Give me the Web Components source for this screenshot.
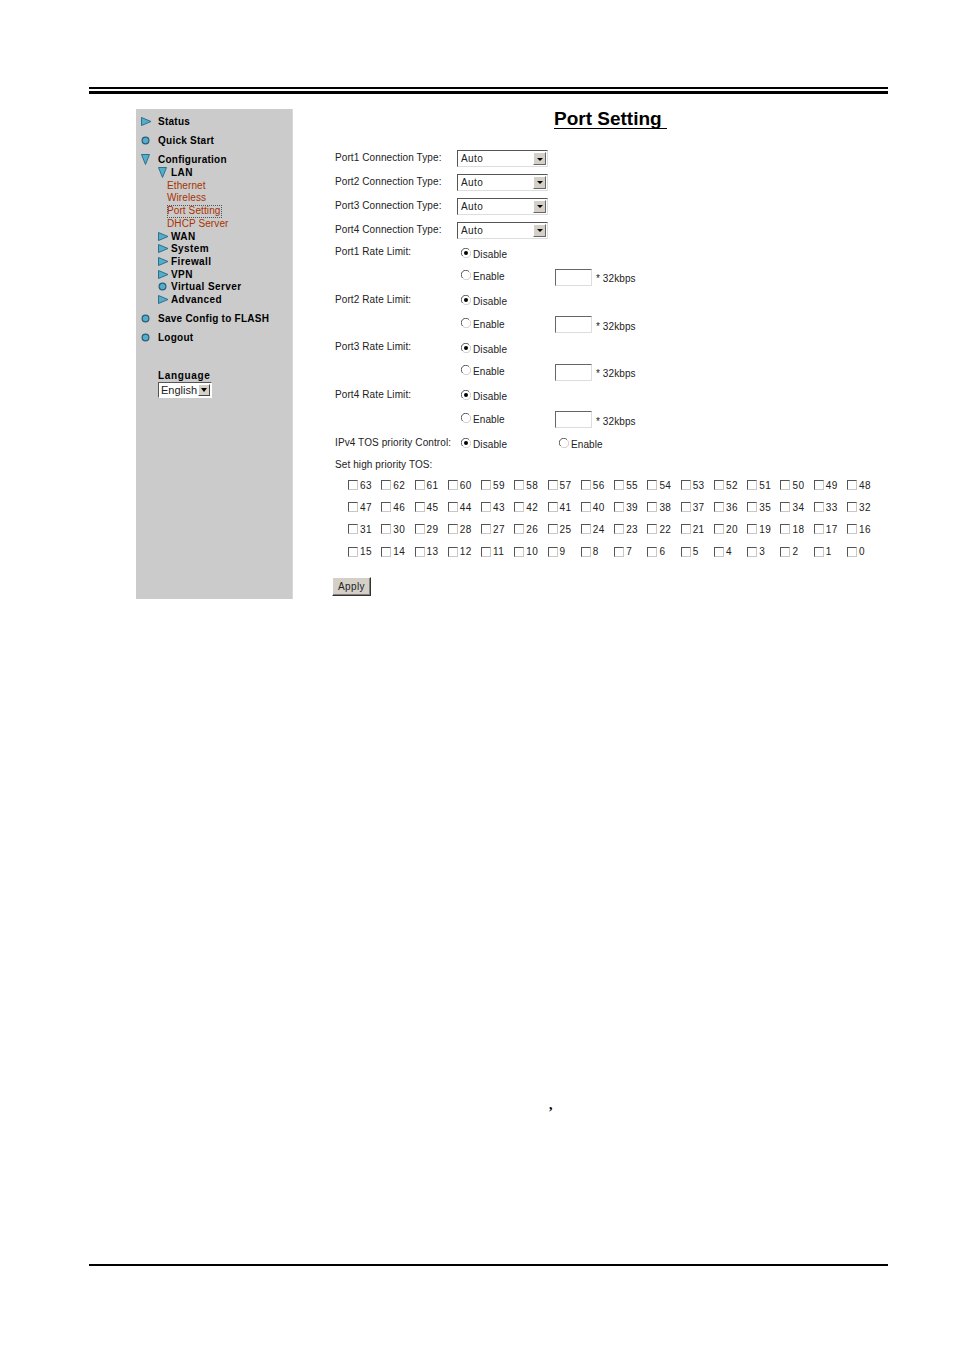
<!DOCTYPE html>
<html>
<head>
<meta charset="utf-8">
<title>Port Setting</title>
<style>
  html, body { margin: 0; background: #fff; }
  body { font-family: "Liberation Sans", Arial, sans-serif; }
</style>
</head>
<body>
<manual-page>
  <router-menu slot="menu"></router-menu>
  <port-setting slot="content"></port-setting>
</manual-page>

<script>
const ARROW = `<svg width="11" height="9" viewBox="0 0 11 9"><path d="M.5.5 10 4.5.5 8.5z" fill="#55adcc" stroke="#2f6f88"/></svg>`;
const DOWN = `<svg width="9" height="11" viewBox="0 0 9 11"><path d="M.5.5h8L4.5 10.5z" fill="#55adcc" stroke="#2f6f88"/></svg>`;
const DOT = `<svg width="9" height="9" viewBox="0 0 9 9"><circle cx="4.5" cy="4.5" r="3.4" fill="#55adcc" stroke="#2a5f78" stroke-width="1.2"/></svg>`;

// page frame: double rule on top, single rule at the bottom
class ManualPage extends HTMLElement {
  constructor() {
    super();
    this.attachShadow({ mode: "open" });
    this.shadowRoot.innerHTML = `
      <style>
        :host { display: block; width: 954px; height: 1349px; box-sizing: border-box; padding: 87px 66px 0 89px; overflow: hidden; }
        .top { height: 2px; border-top: 2px solid #000; border-bottom: 3px solid #000; margin-bottom: 15px; }
        .frame { display: flex; margin-left: 47px; height: 490px; }
        .mark { height: 513px; padding-left: 460px; font: bold 14px "Liberation Serif", serif; line-height: 14px; color: #000; display: flex; align-items: flex-end; }
        .bottom { height: 2px; background: #000; margin-top: 152px; }
      </style>
      <div class="top"></div>
      <div class="frame"><slot name="menu"></slot><slot name="content"></slot></div>
      <div class="mark">,</div>
      <div class="bottom"></div>
    `;
  }
}

class MenuItem extends HTMLElement {
  constructor() {
    super();
    this.attachShadow({ mode: "open" });
    const icons = { arrow: ARROW, down: DOWN, dot: DOT };
    this.shadowRoot.innerHTML = `
      <style>
        :host { display: flex; align-items: center; height: 12.65px; font-weight: bold; font-size: 10px; letter-spacing: .4px; color: #000; white-space: nowrap; }
        .ic { width: 13px; display: flex; align-items: center; justify-content: flex-start; }
        :host([top]) { height: 19px; letter-spacing: .25px; }
        :host([top]) .ic { width: 17px; margin-left: 5px; }
        :host([sub]) .ic { margin-left: 22px; }
      </style>
      <span class="ic">${icons[this.getAttribute("icon")] || ""}</span><slot></slot>
    `;
  }
}

class RouterMenu extends HTMLElement {
  constructor() {
    super();
    this.attachShadow({ mode: "open" });
    this.shadowRoot.innerHTML = `
      <style>
        :host { display: block; width: 157px; flex: none; height: 490px; box-sizing: border-box; padding-top: 3px; background: #cbcbcb; border-right: 1px solid #d8d8d8; }
        .links { display: flex; flex-direction: column; padding: 1px 0 0 31px; margin-bottom: -.5px; color: #a83200; font-size: 10px; letter-spacing: .1px; line-height: 12.7px; }
        .links span { width: max-content; white-space: nowrap; }
        .links .on { outline: 1px dotted #555; outline-offset: -1px; padding-right: 2px; }
        .lang { margin: 23px 0 0 22px; font-weight: bold; font-size: 10px; letter-spacing: .65px; line-height: 12px; }
        .pick { display: flex; width: 54px; height: 16px; margin: 0 0 0 22px; box-sizing: border-box; background: #fff; border: 1px solid; border-color: #555 #fff #fff #555; font-size: 11px; line-height: 14px; padding-left: 2px; justify-content: space-between; color: #222; }
        .pick b { width: 12px; height: 12px; margin: 1px; box-sizing: border-box; background: #d4d0c8; border: 1px solid; border-color: #fff #444 #444 #fff; display: flex; align-items: center; justify-content: center; }
        .pick b i { border: 3px solid transparent; border-top: 4px solid #000; border-bottom: 0; }
      </style>
      <menu-item top icon="arrow">Status</menu-item>
      <menu-item top icon="dot">Quick Start</menu-item>
      <menu-item top icon="down">Configuration</menu-item>
      <menu-item sub icon="down" style="margin-top:-3px">LAN</menu-item>
      <div class="links"><span>Ethernet</span><span>Wireless</span><span class="on">Port Setting</span><span>DHCP Server</span></div>
      <menu-item sub icon="arrow">WAN</menu-item>
      <menu-item sub icon="arrow">System</menu-item>
      <menu-item sub icon="arrow">Firewall</menu-item>
      <menu-item sub icon="arrow">VPN</menu-item>
      <menu-item sub icon="dot">Virtual Server</menu-item>
      <menu-item sub icon="arrow">Advanced</menu-item>
      <menu-item top icon="dot" style="margin-top:3.5px">Save Config to FLASH</menu-item>
      <menu-item top icon="dot">Logout</menu-item>
      <div class="lang">Language</div>
      <div class="pick">English<b><i></i></b></div>
    `;
  }
}

// classic grey-bevel form bits, drawn since native controls do not look like this
class RadioMark extends HTMLElement {
  constructor() {
    super();
    this.attachShadow({ mode: "open" });
    const dot = this.hasAttribute("checked") ? `<circle cx="5" cy="5" r="2" fill="#000"/>` : "";
    this.shadowRoot.innerHTML = `
      <style>:host { display: inline-flex; flex: none; width: 10px; height: 10px; }</style>
      <svg width="10" height="10" viewBox="0 0 10 10">
        <circle cx="5" cy="5" r="4.5" fill="#fff"/>
        <path d="M1.6 8A4.5 4.5 0 0 1 8 1.6" fill="none" stroke="#555"/>
        <path d="M8.4 2A4.5 4.5 0 0 1 2 8.4" fill="none" stroke="#ccc"/>
        ${dot}
      </svg>`;
  }
}

class TosBox extends HTMLElement {
  constructor() {
    super();
    this.attachShadow({ mode: "open" });
    this.shadowRoot.innerHTML = `
      <style>
        :host { display: flex; align-items: center; gap: 2px; font-size: 10px; letter-spacing: .4px; color: #222; }
        i { display: block; width: 10px; height: 10px; box-sizing: border-box; background: #fff; border: 1px solid; border-color: #555 #c8c8c8 #c8c8c8 #555; }
      </style>
      <i></i><slot></slot>`;
  }
}

class AutoSelect extends HTMLElement {
  constructor() {
    super();
    this.attachShadow({ mode: "open" });
    this.shadowRoot.innerHTML = `
      <style>
        :host { display: flex; width: 91px; height: 17px; box-sizing: border-box; background: #fff; border: 1px solid; border-color: #555 #ddd #ddd #555; font-size: 10px; letter-spacing: .4px; line-height: 15px; padding-left: 3px; justify-content: space-between; color: #222; }
        b { width: 11px; height: 11px; margin: 1px; background: #d4d0c8; border: 1px solid; border-color: #fff #666 #666 #fff; display: flex; align-items: center; justify-content: center; }
        i { border: 3px solid transparent; border-top: 3px solid #000; border-bottom: 0; margin-top: 1px; }
      </style>
      Auto<b><i></i></b>`;
  }
}

class RateLimit extends HTMLElement {
  constructor() {
    super();
    this.attachShadow({ mode: "open" });
    this.shadowRoot.innerHTML = `
      <style>
        :host { display: grid; grid-template-columns: 126px 94px auto; grid-template-rows: 22.5px 25px; font-size: 10px; letter-spacing: .1px; color: #222; }
        .lbl { line-height: 12px; }
        .opt { display: flex; align-items: flex-start; gap: 2px; line-height: 12px; }
        .opt radio-mark { margin-top: 1.5px; }
        .opt span { margin-top: 2.5px; }
        .num { display: flex; align-items: flex-start; grid-column: 3; gap: 4px; line-height: 12px; }
        .num i { display: block; width: 37px; height: 17px; box-sizing: border-box; background: #fff; border: 1px solid; border-color: #666 #ddd #ddd #666; }
        .num span { margin-top: 4.5px; }
      </style>
      <div class="lbl"><slot></slot></div>
      <div class="opt"><radio-mark checked></radio-mark><span>Disable</span></div>
      <div></div>
      <div class="opt" style="grid-column:2"><radio-mark></radio-mark><span>Enable</span></div>
      <div class="num"><i></i><span>* 32kbps</span></div>`;
  }
}

class PortSetting extends HTMLElement {
  constructor() {
    super();
    this.attachShadow({ mode: "open" });
    const types = [1, 2, 3, 4].map((n) => `
      <div class="type"><span>Port${n} Connection Type:</span><auto-select></auto-select></div>`).join("");
    const rates = [1, 2, 3, 4].map((n) => `<rate-limit>Port${n} Rate Limit:</rate-limit>`).join("");
    let boxes = "";
    for (let n = 63; n >= 0; n--) boxes += `<tos-box>${n}</tos-box>`;
    this.shadowRoot.innerHTML = `
      <style>
        :host { display: block; width: 595px; flex: none; box-sizing: border-box; padding-left: 42px; font-size: 10px; letter-spacing: .1px; color: #222; }
        h1 { margin: 0 0 0 219px; width: max-content; padding-right: 5px; font-size: 19px; line-height: 20px; letter-spacing: 0; color: #000; border-bottom: 1px solid #000; font-weight: bold; height: 19px; }
        .type { display: flex; align-items: flex-start; height: 23.9px; line-height: 12px; }
        .type span { width: 122px; }
        .type auto-select { margin-top: -2px; }
        .types { margin-top: 23px; }
        .rates { margin-top: -1.4px; }
        .tos { display: grid; grid-template-columns: 126px 98px auto; line-height: 12px; height: 23px; }
        .tos div { display: flex; gap: 2px; align-items: flex-start; }
        .tos span { margin-top: 1px; }
        .tos radio-mark { margin-top: 2px; }
        .set { line-height: 12px; height: 15px; }
        .grid { display: grid; grid-template-columns: repeat(16, 33.27px); grid-auto-rows: 22.1px; margin-left: 13px; align-items: center; }
        button { display: block; width: 39px; height: 19px; margin: 14px 0 0 -3px; padding: 0; background: #d4d0c8; border: 1px solid; border-color: #fff #333 #333 #fff; box-shadow: inset -1px -1px 0 #808080; font: 10px "Liberation Sans", sans-serif; letter-spacing: .4px; color: #222; }
      </style>
      <h1>Port Setting</h1>
      <div class="types">${types}</div>
      <div class="rates">${rates}</div>
      <div class="tos"><span>IPv4 TOS priority Control:</span><div><radio-mark checked></radio-mark><span style="margin-top:3px">Disable</span></div><div><radio-mark></radio-mark><span style="margin-top:3px">Enable</span></div></div>
      <div class="set">Set high priority TOS:</div>
      <div class="grid">${boxes}</div>
      <button>Apply</button>
    `;
  }
}

customElements.define("menu-item", MenuItem);
customElements.define("router-menu", RouterMenu);
customElements.define("radio-mark", RadioMark);
customElements.define("tos-box", TosBox);
customElements.define("auto-select", AutoSelect);
customElements.define("rate-limit", RateLimit);
customElements.define("port-setting", PortSetting);
customElements.define("manual-page", ManualPage);
</script>
</body>
</html>
